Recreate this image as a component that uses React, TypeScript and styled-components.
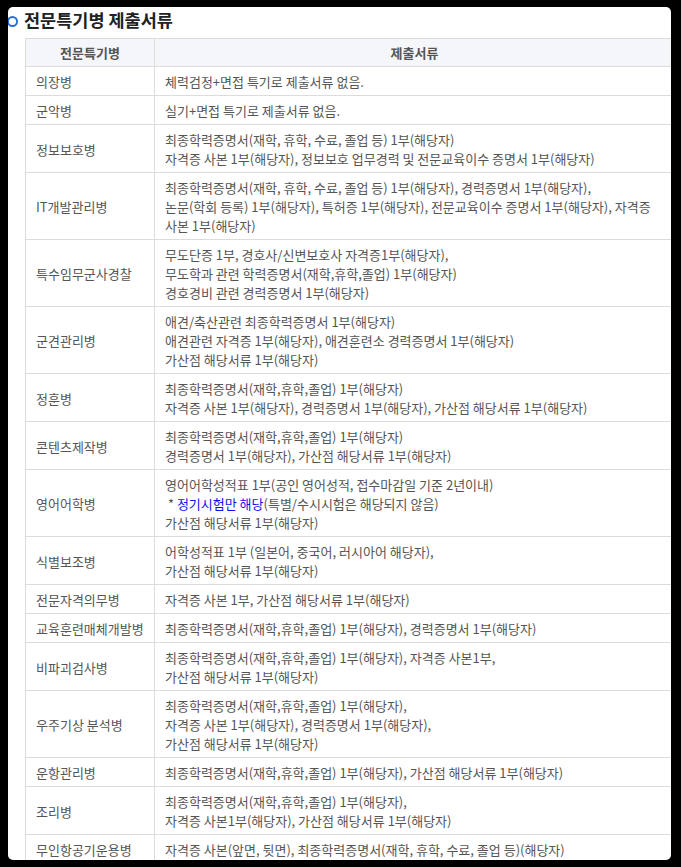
import * as React from "react";
import styled, { createGlobalStyle } from "styled-components";

const GlobalStyle = createGlobalStyle`
	html, body {
		margin: 0;
		padding: 0;
		background: #000;
	}
	body {
		font-family: "Noto Sans CJK KR", "Noto Sans", sans-serif;
		color: #555;
	}
`;

const Frame = styled.div`
	margin: 7px 10px 0 8px;
	height: 853px;
	background: #fff;
	border-radius: 5px;
	overflow: hidden;
`;

const Heading = styled.h2`
	display: flex;
	align-items: center;
	gap: 6px;
	margin: 0;
	height: 24px;
	margin-bottom: 7px;
	font-size: 17.5px;
	font-weight: 700;
	color: #222;
`;

const Bullet = styled.span`
	box-sizing: border-box;
	width: 11px;
	height: 11px;
	margin-left: -1px;
	margin-top: 5px;
	border: 2.5px solid #2671d6;
	border-radius: 50%;
	background: #fff;
`;

const Table = styled.table`
	margin-left: 17px;
	width: 650px;
	border-collapse: collapse;
	font-size: 13px;
	line-height: 19px;
	color: #555;
	table-layout: fixed;
`;

const HeadCell = styled.th`
	padding: 4px 10px;
	background: #f5f6f9;
	border: 1px solid #dcdcdc;
	font-weight: 700;
	color: #555;
	text-align: center;
`;

const NameCell = styled.td`
	padding: 5px 10px 4px;
	border: 1px solid #dcdcdc;
	vertical-align: middle;
	white-space: nowrap;
`;

const DocCell = styled.td`
	padding: 5px 10px 4px;
	border: 1px solid #dcdcdc;
	vertical-align: middle;
`;

const Line = styled.div`
	white-space: nowrap;
`;

const Note = styled.span`
	color: #1010f0;
`;

type Row = { name: string; docs: React.ReactNode[] };

const rows: Row[] = [
	{ name: "의장병", docs: ["체력검정+면접 특기로 제출서류 없음."] },
	{ name: "군악병", docs: ["실기+면접 특기로 제출서류 없음."] },
	{
		name: "정보보호병",
		docs: [
			"최종학력증명서(재학, 휴학, 수료, 졸업 등) 1부(해당자)",
			"자격증 사본 1부(해당자), 정보보호 업무경력 및 전문교육이수 증명서 1부(해당자)",
		],
	},
	{
		name: "IT개발관리병",
		docs: [
			"최종학력증명서(재학, 휴학, 수료, 졸업 등) 1부(해당자), 경력증명서 1부(해당자),",
			"논문(학회 등록) 1부(해당자), 특허증 1부(해당자), 전문교육이수 증명서 1부(해당자), 자격증",
			"사본 1부(해당자)",
		],
	},
	{
		name: "특수임무군사경찰",
		docs: [
			"무도단증 1부, 경호사/신변보호사 자격증1부(해당자),",
			"무도학과 관련 학력증명서(재학,휴학,졸업) 1부(해당자)",
			"경호경비 관련 경력증명서 1부(해당자)",
		],
	},
	{
		name: "군견관리병",
		docs: [
			"애견/축산관련 최종학력증명서 1부(해당자)",
			"애견관련 자격증 1부(해당자), 애견훈련소 경력증명서 1부(해당자)",
			"가산점 해당서류 1부(해당자)",
		],
	},
	{
		name: "정훈병",
		docs: [
			"최종학력증명서(재학,휴학,졸업) 1부(해당자)",
			"자격증 사본 1부(해당자), 경력증명서 1부(해당자), 가산점 해당서류 1부(해당자)",
		],
	},
	{
		name: "콘텐츠제작병",
		docs: [
			"최종학력증명서(재학,휴학,졸업) 1부(해당자)",
			"경력증명서 1부(해당자), 가산점 해당서류 1부(해당자)",
		],
	},
	{
		name: "영어어학병",
		docs: [
			"영어어학성적표 1부(공인 영어성적, 접수마감일 기준 2년이내)",
			<>
				{"\u00a0* "}
				<Note>정기시험만 해당</Note>
				(특별/수시시험은 해당되지 않음)
			</>,
			"가산점 해당서류 1부(해당자)",
		],
	},
	{
		name: "식별보조병",
		docs: [
			"어학성적표 1부 (일본어, 중국어, 러시아어 해당자),",
			"가산점 해당서류 1부(해당자)",
		],
	},
	{ name: "전문자격의무병", docs: ["자격증 사본 1부, 가산점 해당서류 1부(해당자)"] },
	{
		name: "교육훈련매체개발병",
		docs: ["최종학력증명서(재학,휴학,졸업) 1부(해당자), 경력증명서 1부(해당자)"],
	},
	{
		name: "비파괴검사병",
		docs: [
			"최종학력증명서(재학,휴학,졸업) 1부(해당자), 자격증 사본1부,",
			"가산점 해당서류 1부(해당자)",
		],
	},
	{
		name: "우주기상 분석병",
		docs: [
			"최종학력증명서(재학,휴학,졸업) 1부(해당자),",
			"자격증 사본 1부(해당자), 경력증명서 1부(해당자),",
			"가산점 해당서류 1부(해당자)",
		],
	},
	{
		name: "운항관리병",
		docs: ["최종학력증명서(재학,휴학,졸업) 1부(해당자), 가산점 해당서류 1부(해당자)"],
	},
	{
		name: "조리병",
		docs: [
			"최종학력증명서(재학,휴학,졸업) 1부(해당자),",
			"자격증 사본1부(해당자), 가산점 해당서류 1부(해당자)",
		],
	},
	{
		name: "무인항공기운용병",
		docs: ["자격증 사본(앞면, 뒷면), 최종학력증명서(재학, 휴학, 수료, 졸업 등)(해당자)"],
	},
];

const App = () => {
	return (
		<>
			<GlobalStyle />
			<Frame>
				<Heading>
					<Bullet />
					전문특기병 제출서류
				</Heading>
				<Table>
					<colgroup>
						<col style={{ width: 129 }} />
						<col />
					</colgroup>
					<thead>
						<tr>
							<HeadCell>전문특기병</HeadCell>
							<HeadCell>제출서류</HeadCell>
						</tr>
					</thead>
					<tbody>
						{rows.map((row) => (
							<tr key={row.name}>
								<NameCell>{row.name}</NameCell>
								<DocCell>
									{row.docs.map((doc, i) => (
										<Line key={i}>{doc}</Line>
									))}
								</DocCell>
							</tr>
						))}
					</tbody>
				</Table>
			</Frame>
		</>
	);
};

export default App;
